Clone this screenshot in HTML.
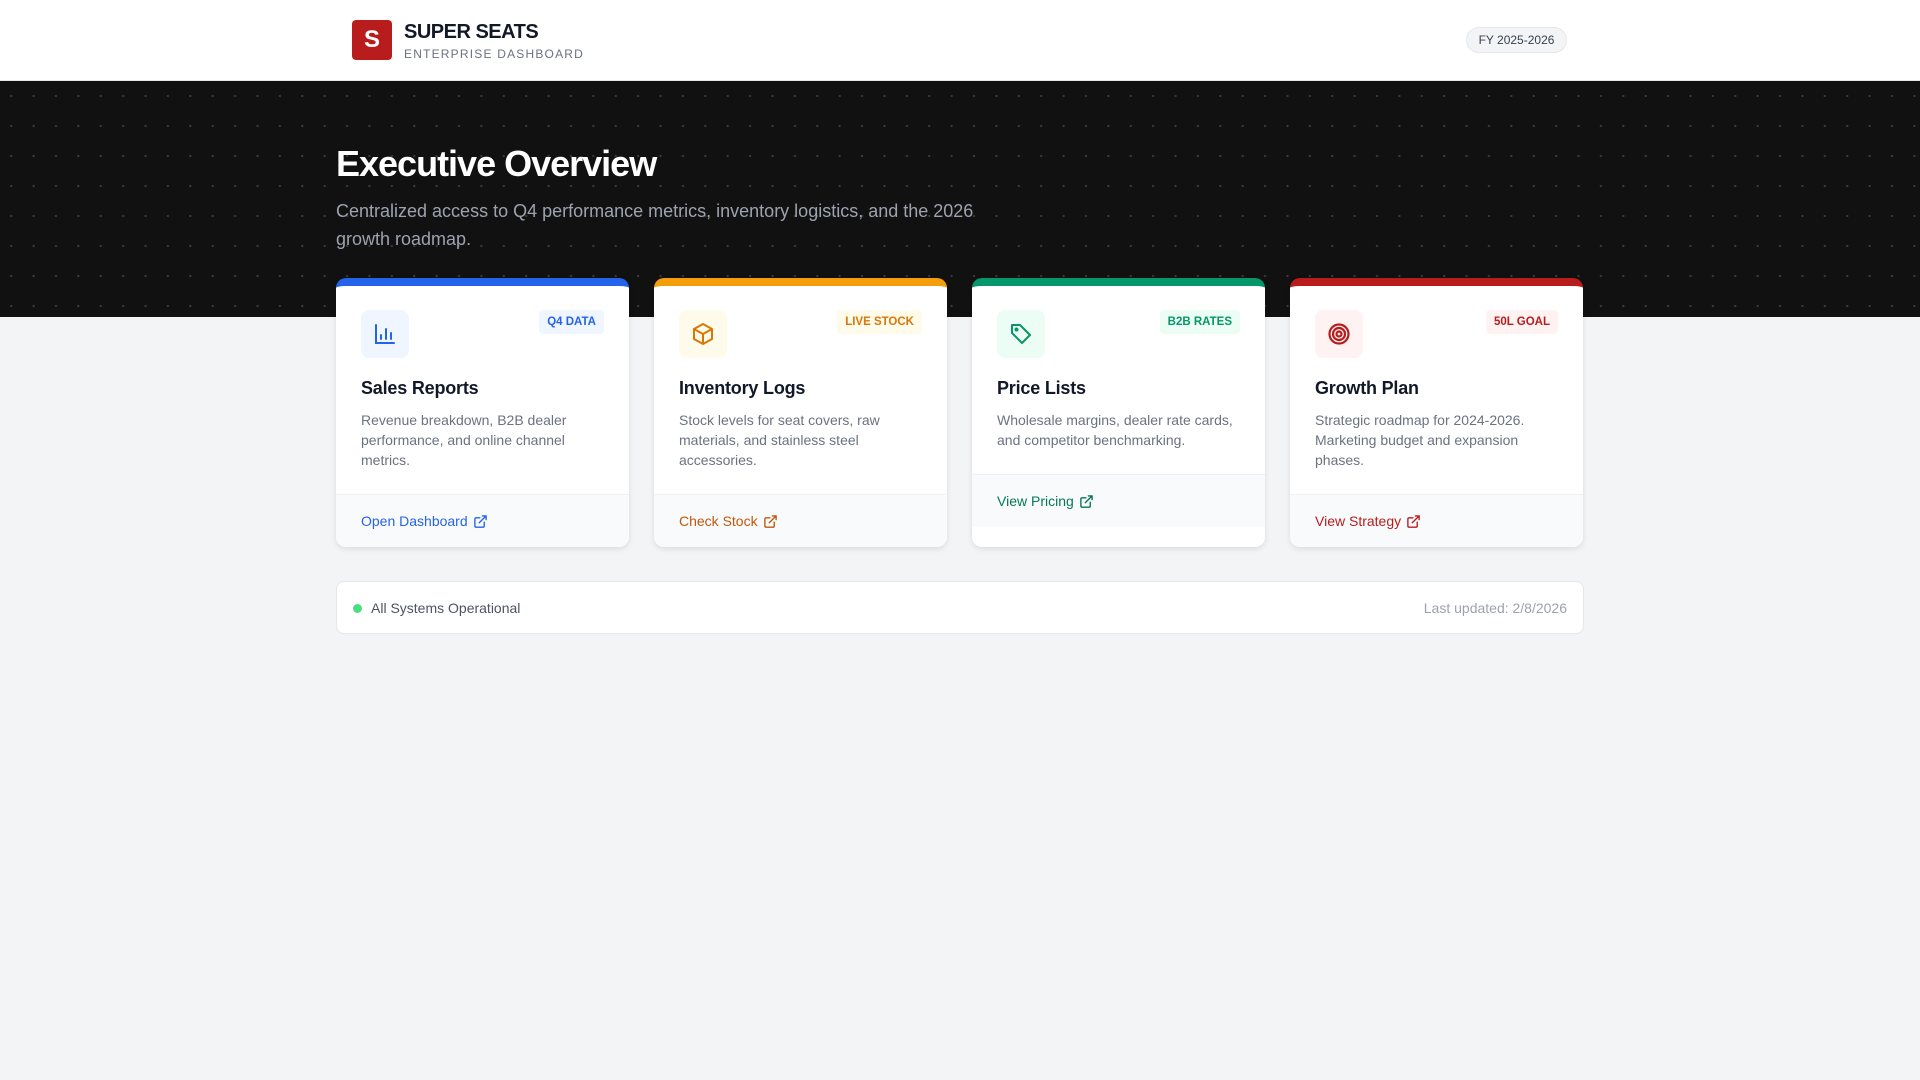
<!DOCTYPE html>
<html><head><meta charset="utf-8"><style>
*{box-sizing:border-box;margin:0;padding:0}
body{width:1920px;height:1080px;background:#f3f4f6;font-family:"Liberation Sans",sans-serif;color:#111827;overflow:hidden}
.hdr{height:81px;background:#fff;border-bottom:1px solid #e5e7eb;position:relative}
.logo{position:absolute;left:352px;top:20px;width:40px;height:40px;background:#b91c1c;border-radius:4px;color:#fff;font-weight:bold;font-size:24px;text-align:center;line-height:40px}
.brand{position:absolute;left:404px;top:21px}
.brand b{display:block;font-size:20px;letter-spacing:-0.5px;color:#111827}
.brand span{display:block;font-size:12px;letter-spacing:1.2px;color:#6b7280;margin-top:3px}
.fy{position:absolute;left:1466px;top:27px;width:101px;height:26px;border:1px solid #e5e7eb;background:#f3f4f6;border-radius:13px;font-size:12px;color:#374151;text-align:center;line-height:24px}
.hero{height:236px;background-color:#111;background-image:radial-gradient(circle,#3a3a3a 1px,transparent 1.3px);background-size:22.4px 30px;background-position:0px 0px}
h1{position:absolute;left:336px;top:143px;font-size:36px;color:#fff;letter-spacing:-1px}
.sub{position:absolute;left:336px;top:197px;width:660px;font-size:18px;line-height:28px;color:#9ca3af}
.cards{position:absolute;left:336px;top:278px;display:flex;gap:25px}
.card{width:293px;height:269px;background:#fff;border-radius:10px;overflow:hidden;box-shadow:0 2px 6px rgba(0,0,0,.1);border-top:8px solid}
.body{padding:24px 24px 0 25px;position:relative}
.ic{width:48px;height:48px;border-radius:8px;display:flex;align-items:center;justify-content:center}
.bd{position:absolute;right:25px;top:24px;font-size:11.5px;font-weight:bold;padding:6px 8px;border-radius:4px}
.t{font-size:18px;font-weight:bold;margin-top:20px;letter-spacing:-0.2px}
.d{font-size:14px;line-height:20px;color:#6b7280;margin-top:11px;height:60px}
.d2{height:40px}
.ft{margin-top:24px;background:#f9fafb;border-top:1px solid #f0f1f3;height:53px;padding:0 25px;display:flex;align-items:center;font-size:14px;gap:5px}
.status{position:absolute;left:336px;top:581px;width:1248px;height:53px;background:#fff;border:1px solid #e5e7eb;border-radius:8px;display:flex;align-items:center;justify-content:space-between;padding:0 16px;font-size:14px;color:#4b5563}
.dot{display:inline-block;width:9px;height:9px;border-radius:50%;background:#4ade80;margin-right:9px;vertical-align:0}
</style></head><body>
<div class="hdr"><div class="logo">S</div><div class="brand"><b>SUPER SEATS</b><span>ENTERPRISE DASHBOARD</span></div><div class="fy">FY 2025-2026</div></div>
<div class="hero"></div>
<h1>Executive Overview</h1>
<div class="sub">Centralized access to Q4 performance metrics, inventory logistics, and the 2026 growth roadmap.</div>
<div class="cards">
<div class="card" style="border-color:#2563eb"><div class="body">
<div class="ic" style="background:#eff6ff"><svg width="24" height="24" viewBox="0 0 24 24" fill="none" stroke="#2563eb" stroke-width="2" stroke-linecap="round"><path d="M3 3v18h18M8 17v-4M13 17V7M18 17v-6"/></svg></div>
<div class="bd" style="background:#eff6ff;color:#2563eb">Q4 DATA</div>
<div class="t">Sales Reports</div><div class="d">Revenue breakdown, B2B dealer performance, and online channel metrics.</div></div>
<div class="ft" style="color:#2563eb">Open Dashboard <svg width="15" height="15" viewBox="0 0 24 24" fill="none" stroke="currentColor" stroke-width="2.2" stroke-linecap="round" stroke-linejoin="round"><path d="M18 13v6a2 2 0 0 1-2 2H5a2 2 0 0 1-2-2V8a2 2 0 0 1 2-2h6M15 3h6v6M10 14L21 3"/></svg></div></div>
<div class="card" style="border-color:#f59e0b"><div class="body">
<div class="ic" style="background:#fffbeb"><svg width="24" height="24" viewBox="0 0 24 24" fill="none" stroke="#d97706" stroke-width="2" stroke-linejoin="round"><path d="M12 2l9 5v10l-9 5-9-5V7z"/><path d="M3 7l9 5 9-5M12 12v10"/></svg></div>
<div class="bd" style="background:#fffbeb;color:#d97706">LIVE STOCK</div>
<div class="t">Inventory Logs</div><div class="d">Stock levels for seat covers, raw materials, and stainless steel accessories.</div></div>
<div class="ft" style="color:#c2570c">Check Stock <svg width="15" height="15" viewBox="0 0 24 24" fill="none" stroke="currentColor" stroke-width="2.2" stroke-linecap="round" stroke-linejoin="round"><path d="M18 13v6a2 2 0 0 1-2 2H5a2 2 0 0 1-2-2V8a2 2 0 0 1 2-2h6M15 3h6v6M10 14L21 3"/></svg></div></div>
<div class="card" style="border-color:#059669"><div class="body">
<div class="ic" style="background:#ecfdf5"><svg width="24" height="24" viewBox="0 0 24 24" fill="none" stroke="#059669" stroke-width="2" stroke-linejoin="round"><path d="M3 3h8l10 10-8 8L3 11z"/><circle cx="7.5" cy="7.5" r="1" fill="#059669"/></svg></div>
<div class="bd" style="background:#ecfdf5;color:#059669">B2B RATES</div>
<div class="t">Price Lists</div><div class="d d2">Wholesale margins, dealer rate cards, and competitor benchmarking.</div></div>
<div class="ft" style="color:#047857">View Pricing <svg width="15" height="15" viewBox="0 0 24 24" fill="none" stroke="currentColor" stroke-width="2.2" stroke-linecap="round" stroke-linejoin="round"><path d="M18 13v6a2 2 0 0 1-2 2H5a2 2 0 0 1-2-2V8a2 2 0 0 1 2-2h6M15 3h6v6M10 14L21 3"/></svg></div></div>
<div class="card" style="border-color:#b91c1c"><div class="body">
<div class="ic" style="background:#fef2f2"><svg width="24" height="24" viewBox="0 0 24 24" fill="none" stroke="#b91c1c" stroke-width="2.2"><circle cx="12" cy="12" r="9.5"/><circle cx="12" cy="12" r="6"/><circle cx="12" cy="12" r="2.5"/></svg></div>
<div class="bd" style="background:#fef2f2;color:#b91c1c">50L GOAL</div>
<div class="t">Growth Plan</div><div class="d">Strategic roadmap for 2024-2026. Marketing budget and expansion phases.</div></div>
<div class="ft" style="color:#b91c1c">View Strategy <svg width="15" height="15" viewBox="0 0 24 24" fill="none" stroke="currentColor" stroke-width="2.2" stroke-linecap="round" stroke-linejoin="round"><path d="M18 13v6a2 2 0 0 1-2 2H5a2 2 0 0 1-2-2V8a2 2 0 0 1 2-2h6M15 3h6v6M10 14L21 3"/></svg></div></div>
</div>
<div class="status"><div><span class="dot"></span>All Systems Operational</div><div style="color:#9ca3af">Last updated: 2/8/2026</div></div>
</body></html>
